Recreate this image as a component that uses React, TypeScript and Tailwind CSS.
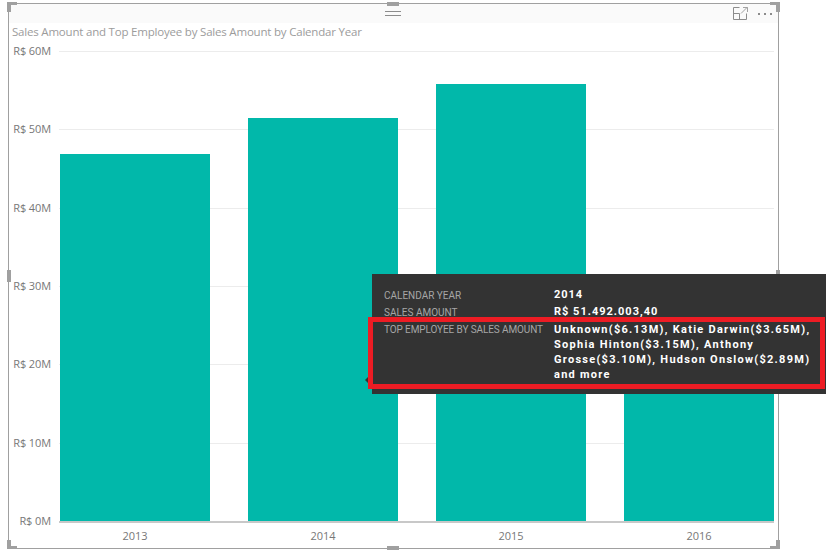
const yLabels = ["R$ 60M", "R$ 50M", "R$ 40M", "R$ 30M", "R$ 20M", "R$ 10M", "R$ 0M"];

const bars = [
  { year: "2013", className: "h-[367px]" },
  { year: "2014", className: "h-[403px]" },
  { year: "2015", className: "h-[437px]" },
  { year: "2016", className: "h-[200px]" },
];

function Handle({ className }: { className: string }) {
  return <div className={`absolute bg-[#a0a0a0] ${className}`} />;
}

function FocusIcon() {
  return (
    <svg width="15" height="13" viewBox="0 0 15 13" fill="none" stroke="#8c8c8c" strokeWidth="1">
      <path d="M6.5 .5H.5v12h13V6.500" />
      <path d="M.5 6.500h6v6" />
      <path d="M8 6.500L14 .5M10 .5h4.500v4.500" strokeWidth=".8" />
    </svg>
  );
}

function Tooltip() {
  return (
    <div className="absolute left-[363px] top-[270px] w-[454px] h-[120px] bg-[#333333] pt-[13px] pl-[12px] font-['Roboto',sans-serif]">
      {/* tooltip pointer, mostly hidden by the red box */}
      <svg className="absolute left-[-7px] top-[103px]" width="3" height="6" viewBox="0 0 3 6">
        <path d="M3 0v6L0 3z" fill="#333333" />
      </svg>
      <div className="flex h-[17px] items-center">
        <div className="w-[170px] text-[10px] text-[#a6a6a6]">CALENDAR YEAR</div>
        <div className="text-[11px] font-bold tracking-[0.9px] text-white">2014</div>
      </div>
      <div className="flex h-[17px] items-center">
        <div className="w-[170px] text-[10px] text-[#a6a6a6]">SALES AMOUNT</div>
        <div className="text-[11px] font-bold tracking-[1px] text-white">R$ 51.492.003,40</div>
      </div>
      <div className="flex mt-[1px]">
        <div className="w-[170px] h-[15px] whitespace-nowrap text-[10px] leading-[15px] tracking-[-0.1px] text-[#a6a6a6]">TOP EMPLOYEE BY SALES AMOUNT</div>
        <div className="w-[264px] text-[11px] leading-[15px] font-bold tracking-[1.27px] text-white">
          Unknown($6.13M), Katie Darwin($3.65M), Sophia Hinton($3.15M), Anthony Grosse($3.10M), Hudson Onslow($2.89M) and more
        </div>
      </div>
      {/* red highlight drawn on top of the screenshot */}
      <div className="absolute left-[-4px] top-[43px] w-[457px] h-[72px] border-[5px] border-[#ed1c24]" />
    </div>
  );
}

export default function App() {
  return (
    <div className="w-[830px] h-[553px] bg-white pt-[3px] pl-[8px] overflow-hidden font-['Open_Sans',sans-serif]">
      <div className="relative w-[771px] h-[546px] border border-[#a0a0a0]">
        {/* corner handles are L shaped */}
        <Handle className="left-[-2px] top-[-2px] w-[10px] h-[3px]" />
        <Handle className="left-[-2px] top-[-2px] w-[4px] h-[10px]" />
        <Handle className="right-[-2px] top-[-2px] w-[10px] h-[3px]" />
        <Handle className="right-[-2px] top-[-2px] w-[4px] h-[10px]" />
        <Handle className="left-[-2px] bottom-[-1px] w-[10px] h-[3px]" />
        <Handle className="left-[-2px] bottom-[-1px] w-[4px] h-[9px]" />
        <Handle className="right-[-2px] bottom-[-1px] w-[10px] h-[3px]" />
        <Handle className="right-[-2px] bottom-[-1px] w-[4px] h-[9px]" />
        <Handle className="left-[378px] top-[-2px] w-[12px] h-[4px]" />
        <Handle className="left-[378px] bottom-[-2px] w-[12px] h-[4px]" />
        <Handle className="left-[-2px] top-[266px] w-[4px] h-[12px]" />
        <Handle className="right-[-2px] top-[266px] w-[4px] h-[12px]" />

        {/* visual header */}
        <div className="flex h-[19px] items-center bg-[#fafafa]">
          <div className="ml-[376px] flex w-[16px] flex-col gap-[3px]">
            <div className="h-px bg-[#8c8c8c]" />
            <div className="h-px bg-[#8c8c8c]" />
          </div>
          <div className="ml-auto mr-[6px] flex items-center gap-[10px]">
            <FocusIcon />
            <div className="flex gap-[4px]">
              <div className="h-[2px] w-[2px] rounded-full bg-[#666666]" />
              <div className="h-[2px] w-[2px] rounded-full bg-[#666666]" />
              <div className="h-[2px] w-[2px] rounded-full bg-[#666666]" />
            </div>
          </div>
        </div>

        <div className="h-[18px] pl-[3px] text-[11.5px] leading-[17px] tracking-[-0.2px] text-[#9c9c9c]">
          Sales Amount and Top Employee by Sales Amount by Calendar Year
        </div>

        <div className="mt-[3px] flex">
          <div className="flex h-[484px] w-[42px] flex-col justify-between text-right text-[11px] leading-[14px] tracking-[-0.1px] text-[#777777]">
            {yLabels.map((label) => (
              <div key={label}>{label}</div>
            ))}
          </div>
          <div className="ml-[8px] mt-[7px] w-[715px]">
            <div className="relative h-[472px]">
              <div className="absolute inset-0 flex flex-col justify-between">
                {yLabels.map((label, i) => (
                  <div key={label} className={i === 6 ? "h-[2px] bg-[#c8c8c8]" : "h-px bg-[#ececec]"} />
                ))}
              </div>
              <div className="relative flex h-[470px] items-end gap-[38px] pl-[1px]">
                {bars.map((bar) => (
                  <div key={bar.year} className={`w-[150px] bg-[#01b8aa] ${bar.className}`} />
                ))}
              </div>
            </div>
            <div className="mt-[5px] flex gap-[38px] pl-[1px]">
              {bars.map((bar) => (
                <div key={bar.year} className="w-[150px] text-center text-[11px] leading-[16px] text-[#777777]">
                  {bar.year}
                </div>
              ))}
            </div>
          </div>
        </div>

        <Tooltip />
      </div>
    </div>
  );
}
